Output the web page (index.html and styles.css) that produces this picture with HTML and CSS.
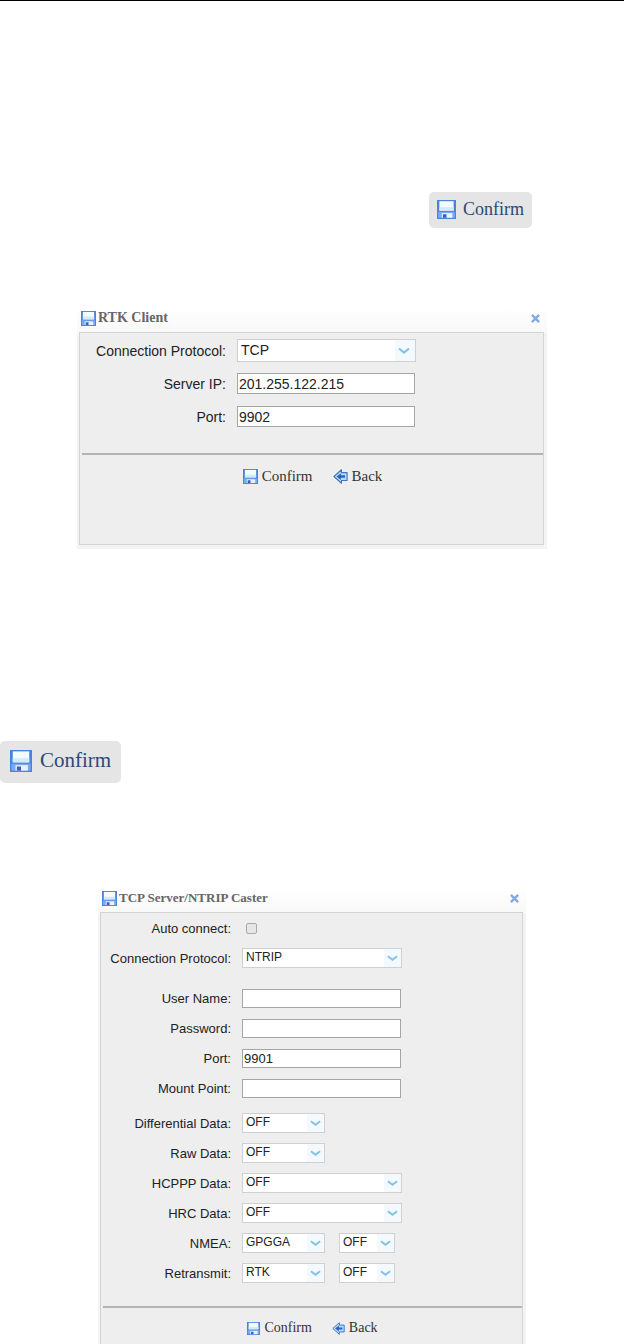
FILE: index.html
```
<!DOCTYPE html>
<html lang="en">
<head>
  <meta charset="UTF-8">
  <meta name="viewport" content="width=device-width, initial-scale=1.0">
  <title>RTK Client</title>
  <link rel="stylesheet" href="styles.css">
</head>
<body>
  <!-- Shared icons -->
  <svg class="sprite" aria-hidden="true">
    <symbol id="save" viewBox="0 0 16 16">
      <path fill="#4a82dc" d="M0 0h16v16H0z"/>
      <path fill="#f4fbff" d="M2 1h12v8H2z"/>
      <path fill="#d3eafb" d="M2 6h12v3H2z"/>
      <path fill="#79a9f0" d="M1 10h14v5H1z"/>
      <path fill="#e9f1fc" d="M4 11h9v4H4z"/>
      <path fill="#3a5fc0" d="M5 12h3v3H5z"/>
    </symbol>
    <symbol id="back" viewBox="0 0 16 16">
      <path fill="#b9dcfa" stroke="#4474bd" stroke-width="1.2" stroke-linejoin="round" d="M9 .8 1 8l8 7.2v-3h6V3.8H9z"/>
      <path fill="#2c63bd" d="M3.8 8 8.4 4.4v2.3h4.4v2.6H8.4v2.3z"/>
    </symbol>
    <symbol id="close" viewBox="0 0 10 10">
      <path fill="none" stroke="#86a9dc" stroke-width="2.6" d="m1 1 8 8M9 1 1 9"/>
    </symbol>
  </svg>

  <div class="toolbar">
    <button class="confirm"><svg><use href="#save"/></svg>Confirm</button>
  </div>

  <form class="dialog client">
    <div class="title">
      <svg><use href="#save"/></svg>
      <h2>RTK Client</h2>
      <button type="button" class="close" aria-label="Close"><svg><use href="#close"/></svg></button>
    </div>
    <div class="content">
      <div class="fields">
        <div class="row">
          <label for="client-protocol">Connection Protocol:</label>
          <select id="client-protocol"><option>TCP</option></select>
        </div>
        <div class="row">
          <label for="server-ip">Server IP:</label>
          <input type="text" id="server-ip" value="201.255.122.215">
        </div>
        <div class="row">
          <label for="client-port">Port:</label>
          <input type="text" id="client-port" value="9902">
        </div>
      </div>
      <div class="actions">
        <button type="button"><svg><use href="#save"/></svg>Confirm</button>
        <button type="button"><svg><use href="#back"/></svg>Back</button>
      </div>
    </div>
  </form>

  <div class="toolbar large">
    <button class="confirm"><svg><use href="#save"/></svg>Confirm</button>
  </div>

  <form class="dialog caster">
    <div class="title">
      <svg><use href="#save"/></svg>
      <h2>TCP Server/NTRIP Caster</h2>
      <button type="button" class="close" aria-label="Close"><svg><use href="#close"/></svg></button>
    </div>
    <div class="content">
      <div class="fields">
        <div class="row">
          <label for="auto">Auto connect:</label>
          <input type="checkbox" id="auto">
        </div>
        <div class="row">
          <label for="protocol">Connection Protocol:</label>
          <select id="protocol"><option>NTRIP</option></select>
        </div>
      </div>
      <div class="fields">
        <div class="row">
          <label for="user">User Name:</label>
          <input type="text" id="user">
        </div>
        <div class="row">
          <label for="password">Password:</label>
          <input type="password" id="password">
        </div>
        <div class="row">
          <label for="port">Port:</label>
          <input type="text" id="port" value="9901">
        </div>
        <div class="row">
          <label for="mount">Mount Point:</label>
          <input type="text" id="mount">
        </div>
      </div>
      <div class="fields">
        <div class="row">
          <label for="diff">Differential Data:</label>
          <select id="diff" class="medium"><option>OFF</option></select>
        </div>
        <div class="row">
          <label for="raw">Raw Data:</label>
          <select id="raw" class="medium"><option>OFF</option></select>
        </div>
        <div class="row">
          <label for="hcppp">HCPPP Data:</label>
          <select id="hcppp"><option>OFF</option></select>
        </div>
        <div class="row">
          <label for="hrc">HRC Data:</label>
          <select id="hrc"><option>OFF</option></select>
        </div>
        <div class="row">
          <label for="nmea">NMEA:</label>
          <select id="nmea" class="medium"><option>GPGGA</option></select>
          <select class="small" aria-label="NMEA rate"><option>OFF</option></select>
        </div>
        <div class="row">
          <label for="retransmit">Retransmit:</label>
          <select id="retransmit" class="medium"><option>RTK</option></select>
          <select class="small" aria-label="Retransmit rate"><option>OFF</option></select>
        </div>
      </div>
      <div class="actions">
        <button type="button"><svg><use href="#save"/></svg>Confirm</button>
        <button type="button"><svg><use href="#back"/></svg>Back</button>
      </div>
    </div>
  </form>
</body>
</html>
```
FILE: styles.css
```
* {
  box-sizing: border-box;
}

body {
  display: flex;
  flex-direction: column;
  min-height: 100vh;
  margin: 0;
  border-top: 1px solid #000;
  background-color: #fff;
  font-family: "Liberation Sans", Arial, sans-serif;
  color: #222;
}

.sprite {
  display: none;
}

button {
  display: flex;
  align-items: center;
  padding: 0;
  border: none;
  background: none;
  font-family: "Liberation Serif", "Times New Roman", serif;
  cursor: pointer;
}

.toolbar {
  display: flex;
  justify-content: flex-end;
  padding: 191px 92px 80px 0;
}

.toolbar.large {
  justify-content: flex-start;
  padding: 192px 0 105px;
}

.confirm {
  gap: 7px;
  height: 36px;
  padding: 0 8px 2px;
  border-radius: 5px;
  background-color: #e6e5e6;
  font-size: 18px;
  color: #284a78;
}

.confirm svg {
  width: 19px;
  height: 21px;
}

.large .confirm {
  gap: 8px;
  height: 42px;
  padding: 0 10px 3px;
  font-size: 21px;
}

.large .confirm svg {
  width: 22px;
  height: 24px;
}

/* Dialogs */
.dialog {
  display: flex;
  flex-direction: column;
  width: 100%;
  margin: 0 auto;
  padding: 0 3px 4px 2px;
  background: linear-gradient(#fff, #f8f8f8 25px, #f3f3f3 26px);
}

.client {
  max-width: 470px;
  font-size: 14px;
}

.caster {
  flex: 1;
  max-width: 428px;
  padding-bottom: 0;
  font-size: 13px;
}

.title {
  display: flex;
  align-items: center;
  height: 24px;
  padding: 0 4px 4px 2px;
}

.title > svg {
  width: 15px;
  height: 15px;
}

h2 {
  flex: 1;
  margin: 0 0 0 2px;
  font-family: "Liberation Serif", "Times New Roman", serif;
  font-size: 14px;
  color: #666;
}

.caster h2 {
  font-size: 13px;
}

.close svg {
  width: 9px;
  height: 9px;
}

.content {
  padding: 1px 0 0 2px;
  border: 1px solid #d4d4d4;
  background-color: #eee;
}

.client .content {
  min-height: 213px;
}

.caster .content {
  flex: 1;
  padding-top: 0;
  border-bottom: none;
}

.row {
  display: flex;
  align-items: center;
  height: 33px;
}

.caster .row {
  height: 30px;
}

.caster .fields + .fields {
  padding-top: 10px;
}

.caster .fields + .fields + .fields {
  padding-top: 5px;
}

label {
  width: 144px;
  margin-right: 11px;
  text-align: right;
}

.caster label {
  width: 128px;
}

input,
select {
  width: 178px;
  height: 21px;
  margin: 0;
  padding: 0 1px;
  border: 1px solid #a5a5a5;
  border-radius: 0;
  background-color: #fff;
  font-family: inherit;
  font-size: 14px;
  color: #222;
}

select {
  width: 179px;
  height: 23px;
  padding: 0 3px 2px;
  border-color: #d0d0d0;
  appearance: none;
  background-image:
    url("data:image/svg+xml,%3Csvg xmlns='http://www.w3.org/2000/svg' width='12' height='8'%3E%3Cpath d='m1 1.5 5 4 5-4' fill='none' stroke='%2385c3e6' stroke-width='2.2'/%3E%3C/svg%3E"),
    linear-gradient(#f3f9fc, #f3f9fc);
  background-position: right 5px center, right;
  background-size: 12px 8px, 20px 100%;
  background-repeat: no-repeat;
}

.caster input,
.caster select {
  width: 159px;
  height: 19px;
  font-size: 13px;
}

.caster select {
  width: 160px;
  height: 20px;
  font-size: 12px;
  background-position: right 3px center, right;
  background-size: 11px 7px, 17px 100%;
}

.caster .medium {
  width: 83px;
}

.caster .small {
  width: 56px;
  margin-left: 14px;
}

.caster input[type="checkbox"] {
  width: 11px;
  height: 11px;
  margin-left: 4px;
  border: 1px solid #aaa;
  border-radius: 2px;
  appearance: none;
  background-color: #e6e6e6;
}

.actions {
  display: flex;
  justify-content: center;
  gap: 20px;
  margin-top: 20px;
  padding: 13px 0 0;
  border-top: 2px solid #b4b4b4;
}

.caster .actions {
  margin-top: 18px;
  padding-top: 12px;
}

.actions button {
  gap: 4px;
  font-size: 15px;
  color: #333;
}

.actions svg {
  width: 15px;
  height: 15px;
}

.caster .actions button {
  font-size: 14px;
}

.caster .actions svg {
  width: 13px;
  height: 13px;
}
```
